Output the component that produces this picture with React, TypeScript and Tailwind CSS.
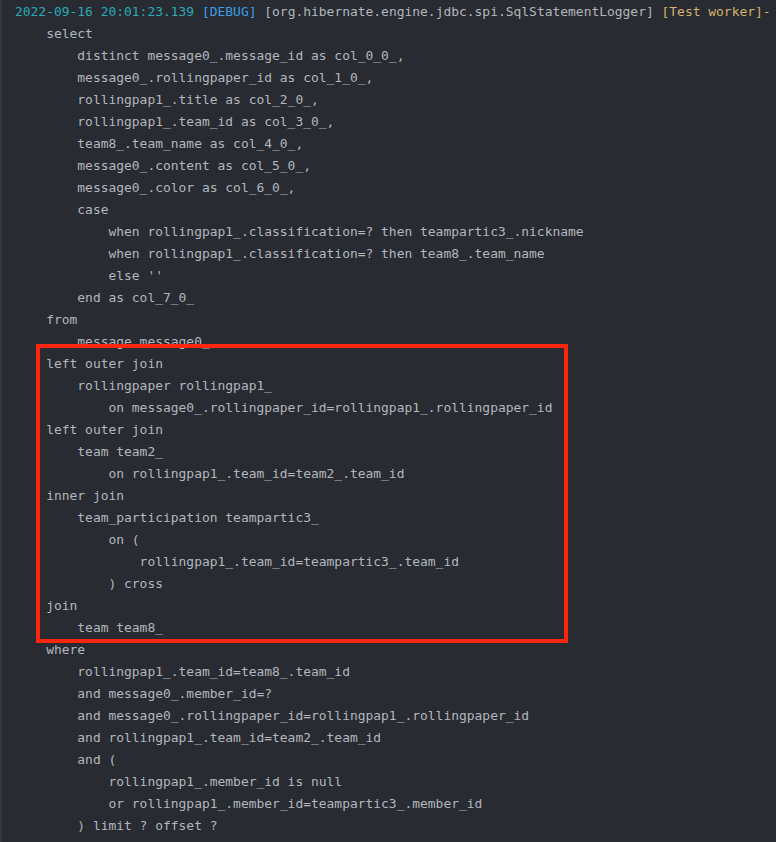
const sqlLines: string[] = [
  "    select",
  "        distinct message0_.message_id as col_0_0_,",
  "        message0_.rollingpaper_id as col_1_0_,",
  "        rollingpap1_.title as col_2_0_,",
  "        rollingpap1_.team_id as col_3_0_,",
  "        team8_.team_name as col_4_0_,",
  "        message0_.content as col_5_0_,",
  "        message0_.color as col_6_0_,",
  "        case",
  "            when rollingpap1_.classification=? then teampartic3_.nickname",
  "            when rollingpap1_.classification=? then team8_.team_name",
  "            else ''",
  "        end as col_7_0_",
  "    from",
  "        message message0_",
  "    left outer join",
  "        rollingpaper rollingpap1_",
  "            on message0_.rollingpaper_id=rollingpap1_.rollingpaper_id",
  "    left outer join",
  "        team team2_",
  "            on rollingpap1_.team_id=team2_.team_id",
  "    inner join",
  "        team_participation teampartic3_",
  "            on (",
  "                rollingpap1_.team_id=teampartic3_.team_id",
  "            ) cross",
  "    join",
  "        team team8_",
  "    where",
  "        rollingpap1_.team_id=team8_.team_id",
  "        and message0_.member_id=?",
  "        and message0_.rollingpaper_id=rollingpap1_.rollingpaper_id",
  "        and rollingpap1_.team_id=team2_.team_id",
  "        and (",
  "            rollingpap1_.member_id is null",
  "            or rollingpap1_.member_id=teampartic3_.member_id",
  "        ) limit ? offset ?",
];

export default function App() {
  return (
    <div className="w-[776px] h-[842px] overflow-hidden bg-[#282b31] border-l-2 border-[#33363c]">
      <div className="relative pl-[13px] pt-px font-['DejaVu_Sans_Mono','Liberation_Mono',monospace] text-[12.95px] leading-[22px] text-[#b3b7be] whitespace-pre">
        <div>
          <span className="text-[#2aacb8]">2022-09-16 20:01:23.139</span>{" "}
          <span className="text-[#3d9fe6]">[DEBUG]</span>{" "}
          <span>[org.hibernate.engine.jdbc.spi.SqlStatementLogger]</span>{" "}
          <span className="text-[#d5b26d]">[Test worker]-</span>
        </div>
        {sqlLines.map((line, i) => (
          <div key={i}>{line}</div>
        ))}

        {/* highlight box drawn over the join clauses */}
        <div className="absolute left-[34px] top-[344px] w-[532px] h-[299px] border-4 border-[#fb260b] pointer-events-none" />
      </div>
    </div>
  );
}
